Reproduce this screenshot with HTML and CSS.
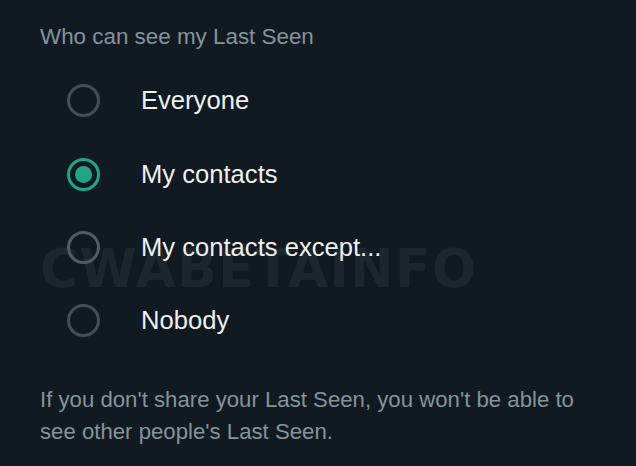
FILE: index.html
```html
<!DOCTYPE html>
<html>
<head>
<meta charset="utf-8">
<link rel="stylesheet" href="styles.css">
</head>
<body>
<div class="screen">
  <div class="title">Who can see my Last Seen</div>
  <div class="options">
    <div class="option"><span class="radio"></span><span class="label">Everyone</span></div>
    <div class="option"><span class="radio checked"></span><span class="label">My contacts</span></div>
    <div class="option"><span class="radio light"></span><span class="label">My contacts except...</span></div>
    <div class="option"><span class="radio"></span><span class="label">Nobody</span></div>
  </div>
  <div class="note">If you don't share your Last Seen, you won't be able to see other people's Last Seen.</div>
  <div class="watermark">CWABETAINFO</div>
</div>
</body>
</html>
```
FILE: styles.css
```css
html, body {
  margin: 0;
  padding: 0;
  background: #111a21;
}
.screen {
  position: relative;
  width: 636px;
  height: 466px;
  overflow: hidden;
  font-family: "Liberation Sans", Arial, sans-serif;
}
.title {
  padding: 22px 0 0 40px;
  font-size: 22.4px;
  line-height: 30px;
  color: #85939c;
}
.options {
  display: flex;
  flex-direction: column;
  margin-top: 12px;
}
.option {
  display: flex;
  align-items: center;
  height: 73.4px;
  padding-left: 67px;
  position: relative;
  z-index: 1;
}
.radio {
  box-sizing: border-box;
  width: 33px;
  height: 33px;
  border-radius: 50%;
  border: 3px solid #434f57;
  display: flex;
  align-items: center;
  justify-content: center;
}
.radio.light {
  border-color: #505b62;
}
.radio.checked {
  border-color: #1fa685;
}
.radio.checked::after {
  content: "";
  width: 17px;
  height: 17px;
  border-radius: 50%;
  background: #1fa685;
}
.label {
  margin-left: 41px;
  font-size: 25.6px;
  color: #eef0f1;
}
.note {
  padding: 26px 40px 0 40px;
  font-size: 22.2px;
  line-height: 32px;
  color: #85939c;
}
.watermark {
  position: absolute;
  left: 40px;
  top: 237px;
  font-family: "DejaVu Sans", sans-serif;
  font-weight: bold;
  font-size: 54px;
  line-height: 63px;
  letter-spacing: 1.5px;
  transform: scaleX(0.96);
  transform-origin: left top;
  color: #1d262d;
  z-index: 0;
}
```
